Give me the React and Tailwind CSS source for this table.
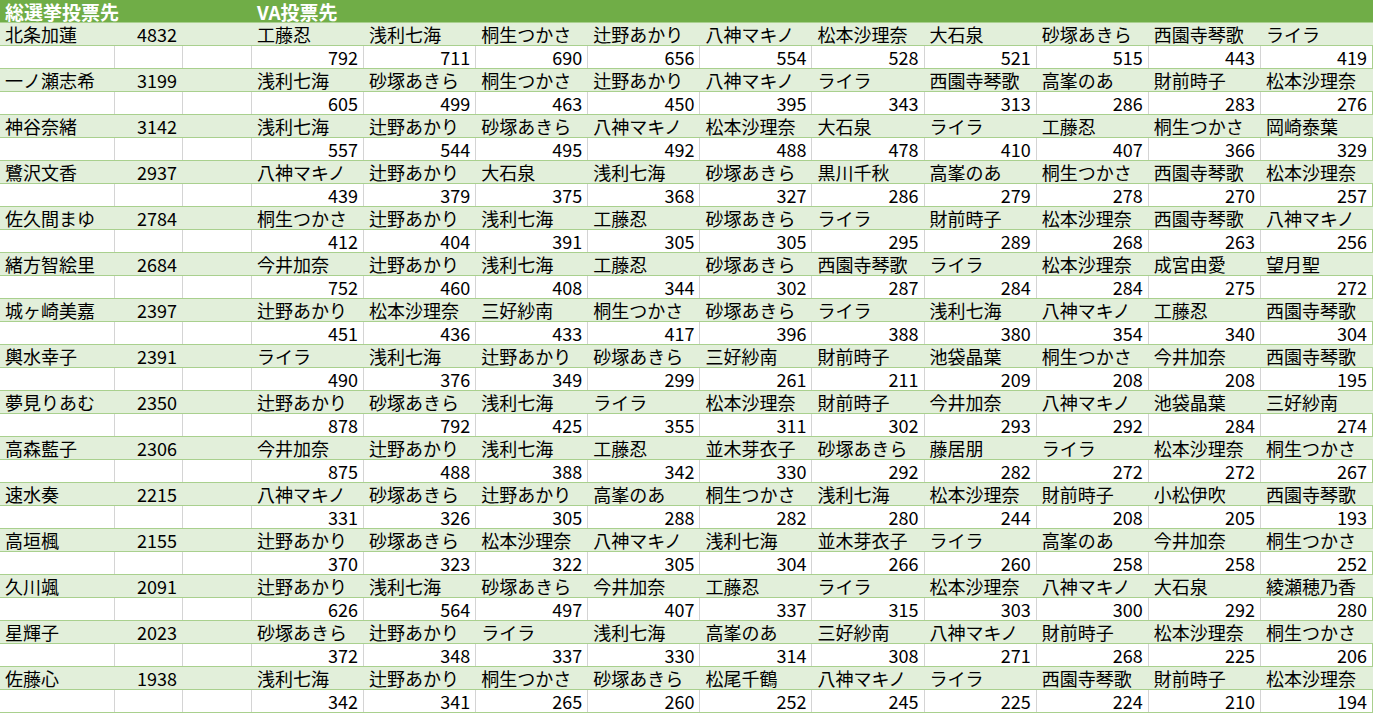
import React from 'react'

const rows = [
  ['北条加蓮', 4832, [['工藤忍', 792], ['浅利七海', 711], ['桐生つかさ', 690], ['辻野あかり', 656], ['八神マキノ', 554], ['松本沙理奈', 528], ['大石泉', 521], ['砂塚あきら', 515], ['西園寺琴歌', 443], ['ライラ', 419]]],
  ['一ノ瀬志希', 3199, [['浅利七海', 605], ['砂塚あきら', 499], ['桐生つかさ', 463], ['辻野あかり', 450], ['八神マキノ', 395], ['ライラ', 343], ['西園寺琴歌', 313], ['高峯のあ', 286], ['財前時子', 283], ['松本沙理奈', 276]]],
  ['神谷奈緒', 3142, [['浅利七海', 557], ['辻野あかり', 544], ['砂塚あきら', 495], ['八神マキノ', 492], ['松本沙理奈', 488], ['大石泉', 478], ['ライラ', 410], ['工藤忍', 407], ['桐生つかさ', 366], ['岡崎泰葉', 329]]],
  ['鷺沢文香', 2937, [['八神マキノ', 439], ['辻野あかり', 379], ['大石泉', 375], ['浅利七海', 368], ['砂塚あきら', 327], ['黒川千秋', 286], ['高峯のあ', 279], ['桐生つかさ', 278], ['西園寺琴歌', 270], ['松本沙理奈', 257]]],
  ['佐久間まゆ', 2784, [['桐生つかさ', 412], ['辻野あかり', 404], ['浅利七海', 391], ['工藤忍', 305], ['砂塚あきら', 305], ['ライラ', 295], ['財前時子', 289], ['松本沙理奈', 268], ['西園寺琴歌', 263], ['八神マキノ', 256]]],
  ['緒方智絵里', 2684, [['今井加奈', 752], ['辻野あかり', 460], ['浅利七海', 408], ['工藤忍', 344], ['砂塚あきら', 302], ['西園寺琴歌', 287], ['ライラ', 284], ['松本沙理奈', 284], ['成宮由愛', 275], ['望月聖', 272]]],
  ['城ヶ崎美嘉', 2397, [['辻野あかり', 451], ['松本沙理奈', 436], ['三好紗南', 433], ['桐生つかさ', 417], ['砂塚あきら', 396], ['ライラ', 388], ['浅利七海', 380], ['八神マキノ', 354], ['工藤忍', 340], ['西園寺琴歌', 304]]],
  ['輿水幸子', 2391, [['ライラ', 490], ['浅利七海', 376], ['辻野あかり', 349], ['砂塚あきら', 299], ['三好紗南', 261], ['財前時子', 211], ['池袋晶葉', 209], ['桐生つかさ', 208], ['今井加奈', 208], ['西園寺琴歌', 195]]],
  ['夢見りあむ', 2350, [['辻野あかり', 878], ['砂塚あきら', 792], ['浅利七海', 425], ['ライラ', 355], ['松本沙理奈', 311], ['財前時子', 302], ['今井加奈', 293], ['八神マキノ', 292], ['池袋晶葉', 284], ['三好紗南', 274]]],
  ['高森藍子', 2306, [['今井加奈', 875], ['辻野あかり', 488], ['浅利七海', 388], ['工藤忍', 342], ['並木芽衣子', 330], ['砂塚あきら', 292], ['藤居朋', 282], ['ライラ', 272], ['松本沙理奈', 272], ['桐生つかさ', 267]]],
  ['速水奏', 2215, [['八神マキノ', 331], ['砂塚あきら', 326], ['辻野あかり', 305], ['高峯のあ', 288], ['桐生つかさ', 282], ['浅利七海', 280], ['松本沙理奈', 244], ['財前時子', 208], ['小松伊吹', 205], ['西園寺琴歌', 193]]],
  ['高垣楓', 2155, [['辻野あかり', 370], ['砂塚あきら', 323], ['松本沙理奈', 322], ['八神マキノ', 305], ['浅利七海', 304], ['並木芽衣子', 266], ['ライラ', 260], ['高峯のあ', 258], ['今井加奈', 258], ['桐生つかさ', 252]]],
  ['久川颯', 2091, [['辻野あかり', 626], ['浅利七海', 564], ['砂塚あきら', 497], ['今井加奈', 407], ['工藤忍', 337], ['ライラ', 315], ['松本沙理奈', 303], ['八神マキノ', 300], ['大石泉', 292], ['綾瀬穂乃香', 280]]],
  ['星輝子', 2023, [['砂塚あきら', 372], ['辻野あかり', 348], ['ライラ', 337], ['浅利七海', 330], ['高峯のあ', 314], ['三好紗南', 308], ['八神マキノ', 271], ['財前時子', 268], ['松本沙理奈', 225], ['桐生つかさ', 206]]],
  ['佐藤心', 1938, [['浅利七海', 342], ['辻野あかり', 341], ['桐生つかさ', 265], ['砂塚あきら', 260], ['松尾千鶴', 252], ['八神マキノ', 245], ['ライラ', 225], ['西園寺琴歌', 224], ['財前時子', 210], ['松本沙理奈', 194]]],
]

const grid = 'grid grid-cols-[115px_68px_69px_repeat(10,minmax(0,1fr))]'

const App = () => {
  return (
    <div className="w-[1373px] h-[714px] overflow-hidden bg-white text-black text-[18px]" style={{ fontFamily: '"Noto Sans CJK JP", "Noto Sans", sans-serif' }}>
      <div className={`${grid} h-[23px] bg-[#70ad47] border-b border-[#a9d08e] text-white font-bold text-[19px] leading-[22px]`}>
        <div className="col-span-3 pl-[5px] flex items-center h-[22px] leading-none whitespace-nowrap">総選挙投票先</div>
        <div className="col-span-2 pl-[5px] flex items-center h-[22px] leading-none whitespace-nowrap">VA投票先</div>
      </div>
      {rows.map(([name, total, votes]) => (
        <React.Fragment key={name}>
          <div className={`${grid} h-[23px] bg-[#e2efda] border-b border-[#a9d08e] leading-[22px]`}>
            <div className="pl-[5px] whitespace-nowrap">{name}</div>
            <div className="text-right pr-[6px]">{total}</div>
            <div></div>
            {votes.map(([v], i) => (
              <div key={i} className="pl-[5px] whitespace-nowrap">{v}</div>
            ))}
          </div>
          <div className={`${grid} h-[23px] bg-white border-b border-[#a9d08e] leading-[22px]`}>
            <div className="border-r border-[#d4d4d4]"></div>
            <div className="border-r border-[#d4d4d4]"></div>
            <div className="border-r border-[#d4d4d4]"></div>
            {votes.map(([, n], i) => (
              <div key={i} className={`text-right pr-[5px] ${i === 9 ? 'border-r border-[#a9d08e]' : 'border-r border-[#d4d4d4]'}`}>{n}</div>
            ))}
          </div>
        </React.Fragment>
      ))}
    </div>
  )
}

export default App
